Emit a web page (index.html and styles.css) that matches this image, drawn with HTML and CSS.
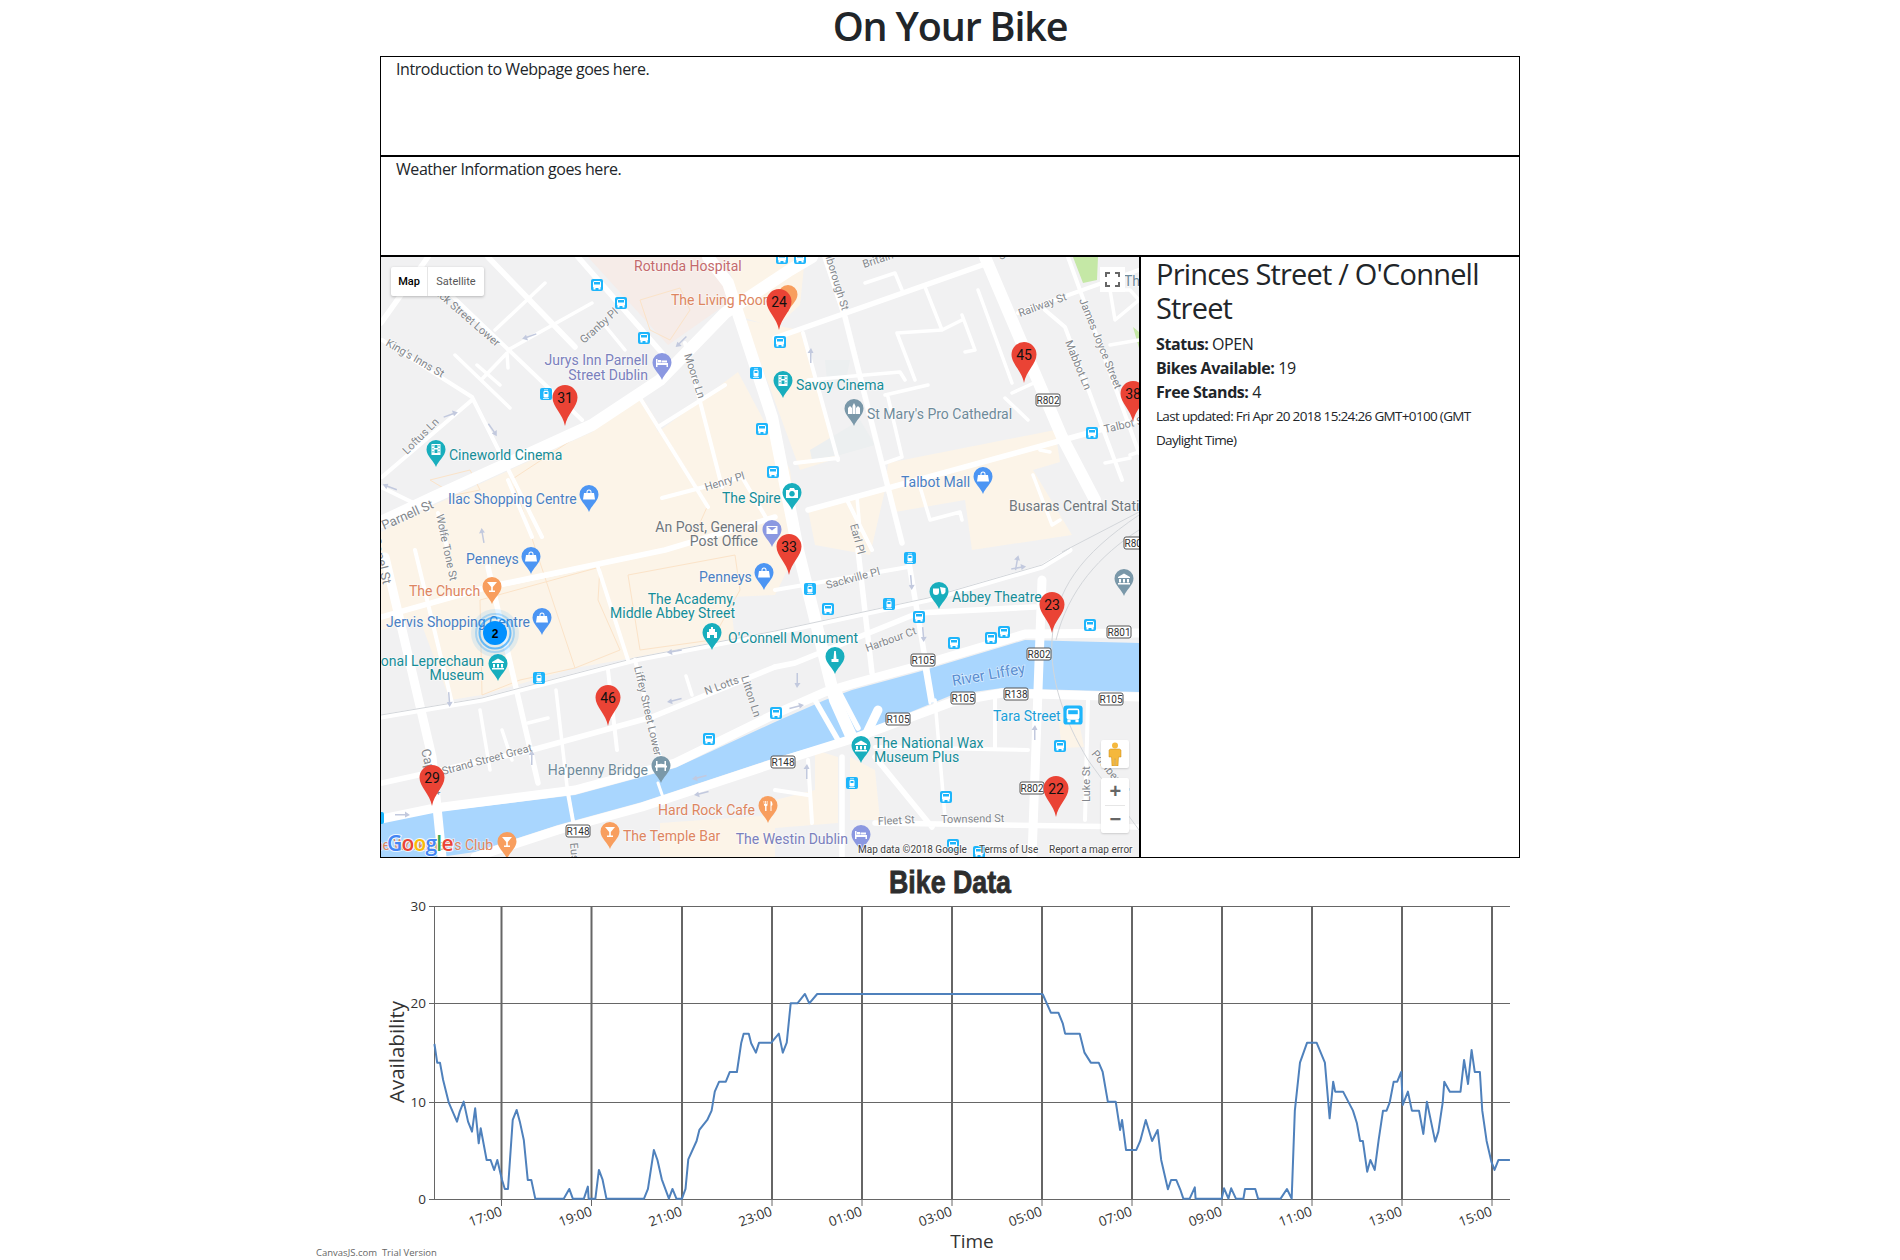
FILE: index.html
```html
<!DOCTYPE html>
<html lang="en">
<head>
    <meta charset="UTF-8">
    <title>On Your Bike</title>
    <link rel="stylesheet" href="styles.css">
</head>
<body>
    <h1 class="page-title">On Your Bike</h1>
    <div class="container">
        <div class="box">Introduction to Webpage goes here.</div>
        <div class="box">Weather Information goes here.</div>
        <div class="map-row">
            <div class="map-box">
                <svg class="map" viewBox="381 257 758 600" xmlns="http://www.w3.org/2000/svg">
                    <defs>
                        <path id="pin" d="M0 17C-2 11-9.5 6-9.5-.5a9.5 9.5 0 0 1 19 0C9.500 6 2 11 0 17z"/>
                        <path id="marker" d="M0 41C-2 29-12.500 22-12.500 12.500a12.500 12.500 0 0 1 25 0C12.500 22 2 29 0 41z"/>
                        <path id="arrow" d="M-7 0H3v-2.500L8 1 3 3.500V1.500H-7z"/>
                        <g id="bus">
                            <rect x="-6" y="-6" width="12" height="12" rx="2" fill="#1db5fb"/>
                            <rect x="-4" y="-4" width="8" height="7" rx="1.500" fill="#fff"/>
                            <rect x="-3" y="-3" width="6" height="2.500" fill="#1db5fb"/>
                            <path d="M-3.500 3h2v1.500h-2zM1.500 3h2v1.500h-2z" fill="#fff"/>
                        </g>
                        <g id="tram">
                            <rect x="-6" y="-6" width="12" height="12" rx="2" fill="#1db5fb"/>
                            <rect x="-2.500" y="-3" width="5" height="6.500" rx="1" fill="#fff"/>
                            <rect x="-1.500" y="-2" width="3" height="2" fill="#1db5fb"/>
                            <path d="M-2-4.500h4v.8h-4zM-3 4h6v.8h-6z" fill="#fff"/>
                        </g>
                        <path id="bag" d="M-5-2h10l1 6.500h-12zM-2.500-2v-1a2.500 2.500 0 0 1 5 0v1h-1v-1a1.500 1.500 0 0 0-3 0v1z"/>
                        <path id="film" d="M-4.500-6h9v11h-9zM-3.500-5v1.500h1V-5zM2.500-5v1.500h1V-5zM-3.500-2v1.500h1V-2zM2.500-2v1.500h1V-2zM-3.500 1v1.500h1V1zM2.500 1v1.500h1V1zM-1.500-5v3h3v-3zM-1.500-.500v3.500h3V-.500z" fill-rule="evenodd"/>
                        <path id="bed" d="M-6-4h1.500v4H6v4H4.500V2h-9v2H-6zM-4-3h3v2.500h-3zM-.500-2.500H5V-.500H-.500z"/>
                        <path id="glass" d="M-5-5H5L.800 0v3.500H3V5h-6V3.500H-.800V0z"/>
                        <path id="fork" d="M-4.500-5h.8v3h.8v-3h.8v3h.8v-3h.8v4.500l-1 .8V5h-1.400V.300l-1-.8zM2.500-5c1.500 0 2 2 2 4l-1 1v5H2.500z"/>
                        <path id="museum" d="M0-5.500L6-2v1H-6v-1zM-5 0h2v3.500h-2zM-1 0h2v3.500h-2zM3 0h2v3.500H3zM-6 4h12v1.500H-6z"/>
                        <path id="letter" d="M-5.500-4h11v8h-11zM-4.500-3L0 .500 4.500-3z" fill-rule="evenodd"/>
                        <path id="camera" d="M-6-3h3l1-2h4l1 2h3v8H-6zM0-2a2.800 2.800 0 1 0 .01 0z" fill-rule="evenodd"/>
                        <path id="church" d="M-6 5V-1l2-2 2 2v6zM-1.500 5V-3L0-6 1.500-3V5zM2 5V-1l2-2 2 2v6z"/>
                        <path id="masks" d="M-6-3.500h6v3.500a3 3 0 0 1-6 0zM1-5l5.500 1V0a3 3 0 0 1-4 2z"/>
                        <path id="castle" d="M-5 5V-1h2v-3h2v-2h2v2h2v3h2v6h-3V2h-4v3z"/>
                        <path id="obelisk" d="M-.800-6h1.600L1.500 2h2v3h-7V2h2z"/>
                        <path id="span" d="M-6 0c3-3 9-3 12 0v1.500H-6zM-5-5h1.500V5H-5zM3.500-5H5V5H3.500z"/>
                    </defs>

                    <rect class="m-ground" x="381" y="257" width="758" height="600"/>

                    <!-- shops and builtup blocks -->
                    <path class="m-shops" d="M381 532L432 506 592 432 640 395 658 432 738 372 790 470 800 545 775 595 730 597 735 640 575 668 482 695 450 700 420 620 381 630z"/>
                    <path class="m-shops" d="M745 320L800 330 838 458 800 470z"/>
                    <path class="m-shops" d="M725 257H805L800 305 775 328 745 318z"/>
                    <path class="m-shops" d="M888 463L1055 430 1060 462 1033 470 1072 535 972 550 965 500 895 512 885 490 808 510 815 545 870 555 885 490z"/>
                    <path class="m-shops" d="M775 800L815 790 815 750 838 757 838 823 775 828zM850 757L875 770 880 820 850 820zM660 823L775 815 775 857 660 857zM1058 717H1078L1084 747 1062 748z"/>
                    <path class="m-rotunda" d="M588 257H730L725 305 668 345z"/>
                    <path class="m-park" d="M1073 257H1098L1097 280 1083 283zM1133 327L1139 332V348z"/>
                    <path class="m-block" d="M825 360H850L845 385 828 390zM810 450L860 420 875 445 840 455 812 460z"/>

                    <!-- building outlines -->
                    <path class="m-outline" d="M511 480L640 395 708 505 690 545M512 478L575 668M640 300L680 288 690 310 670 340 650 330zM470 470L430 480 455 495 480 490z"/>
                    <path class="m-outline" d="M480 600L600 567 598 600 620 650 575 668 520 680 482 695zM628 575L735 555 740 590 712 640 640 650z"/>

                    <!-- river -->
                    <path class="m-river" d="M381 822L435 812 575 795 675 768 775 722 825 700 852 690 918 672 1025 640 1139 643V692L1002 688 952 695 855 735 775 758 642 802 558 825 475 852 440 857H381z"/>

                    <!-- roads -->
                    <path class="r-xl" d="M381 522L432 498 592 425 660 380 725 313 790 270 812 257"/>
                    <path class="r-xl" d="M708 257L728 283 772 417 798 550 835 700 852 738"/>
                    <path class="r-xl" d="M985 257L1062 437 1095 500"/>
                    <path class="r-lg" d="M381 819L435 808 575 790 675 763 775 714 825 692 852 684 918 666 1025 634 1139 633"/>
                    <path class="r-lg" d="M475 857L558 830 642 807 775 763 855 738 952 702 1002 693 1139 697"/>
                    <path class="r-lg" d="M1042 580L1038 690 1032 857"/>
                    <path class="r-lg" d="M385 557L432 757 442 857"/>
                    <path class="r-lg" d="M878 710L866 735"/>
                    <path class="r-md" d="M381 323L428 257M775 338L988 263M808 510L1092 432 1139 420M775 667L795 663 918 613 1035 607M775 517L665 550 488 587 381 617"/>
                    <path class="r-md" d="M488 567L538 783M382 783L532 750 652 717 775 667M488 257L575 347M578 257L662 353M842 757V857M875 757L932 827M875 823L1139 827"/>
                    <path class="r-md" d="M825 257L845 317 902 543M908 557L932 700M858 550L872 673"/>
                    <path class="r-abbey" d="M381 717L482 700 635 660 775 633 928 600 1042 567 1070 550"/>
                    <path class="r-rail" d="M381 715L482 698 635 658 775 631 928 598 1042 565 1070 548"/>
                    <path class="r-sm" d="M425 270L582 420M382 340L472 397 542 537M382 477L472 400M381 487L428 510M685 343L722 487M658 427L725 385M637 393L708 507M662 498L742 477 775 533"/>
                    <path class="r-sm" d="M1018 313L1139 270M1045 310L1065 327 1122 480M1068 257L1139 453M847 500L872 550M803 333L838 460M795 463L838 458M415 550L452 703M438 513L447 547M508 480L532 537M598 567L628 660M635 660L660 757"/>
                    <path class="r-sm" d="M608 670L617 750M775 590L908 567M995 697V747M875 747L1028 750M1088 700L1085 820M808 760L812 823M775 790L808 795"/>
                    <path class="r-xs" d="M495 330L545 283M508 350L592 303M602 322L625 350M455 355L510 408M483 378L507 353 508 368M477 365L500 385M480 590L575 570M556 690L568 795 575 833M480 710L490 770M502 730L512 760M528 723L548 718M686 676L692 695M935 700L945 817"/>
                    <path class="r-xs" d="M865 283L895 273 902 290M897 333L942 330 962 320M897 333L915 380M925 287L942 330M962 315L975 350 965 352M978 290L1012 383M1012 393L1036 382M1005 398L1028 420M808 380L900 372 905 380M885 395L928 385M888 397L902 457 885 463"/>
                    <path class="r-xs" d="M918 480L930 520 960 512 962 520M1033 475L1052 525 1060 520M1040 450L1050 452M1130 455L1139 452M1105 463L1130 458M857 497L860 530"/>
                    <path class="r-xs" d="M1110 290H1130L1139 300 1115 320zM1110 345L1139 340"/>
                    <path class="r-rail" d="M1139 515C1080 555 1055 590 1052 640 1050 680 1064 720 1088 760L1139 830"/>
                    <path class="r-rail" d="M1139 530C1100 555 1068 590 1056 640M1139 512L1062 552"/>
                    <path class="r-thin" d="M658 783L665 803M568 790L575 830M924 668L930 703"/>
                    <path class="r-md" d="M838 690L858 728M815 700L838 740"/>

                    <!-- one-way arrows -->
                    <g class="m-arrows">
                        <use href="#arrow" transform="translate(530 337) rotate(160)"/>
                        <use href="#arrow" transform="translate(682 342) rotate(135)"/>
                        <use href="#arrow" transform="translate(450 414) rotate(-20)"/>
                        <use href="#arrow" transform="translate(493 429) rotate(55)"/>
                        <use href="#arrow" transform="translate(390 488) rotate(200)"/>
                        <use href="#arrow" transform="translate(443 534) rotate(-100)"/>
                        <use href="#arrow" transform="translate(482 536) rotate(-100)"/>
                        <use href="#arrow" transform="translate(810 356) rotate(-90)"/>
                        <use href="#arrow" transform="translate(450 699) rotate(85)"/>
                        <use href="#arrow" transform="translate(675 652) rotate(170)"/>
                        <use href="#arrow" transform="translate(675 701) rotate(165)"/>
                        <use href="#arrow" transform="translate(531 758) rotate(-90)"/>
                        <use href="#arrow" transform="translate(402 814) rotate(0)"/>
                        <use href="#arrow" transform="translate(700 778) rotate(165)"/>
                        <use href="#arrow" transform="translate(702 794) rotate(165)"/>
                        <use href="#arrow" transform="translate(912 582) rotate(85)"/>
                        <use href="#arrow" transform="translate(1016 563) rotate(-80)"/>
                        <use href="#arrow" transform="translate(1018 567) rotate(-10)"/>
                        <use href="#arrow" transform="translate(924 634) rotate(85)"/>
                        <use href="#arrow" transform="translate(798 680) rotate(90)"/>
                        <use href="#arrow" transform="translate(796 706) rotate(-15)"/>
                        <use href="#arrow" transform="translate(1034 733) rotate(-90)"/>
                        <use href="#arrow" transform="translate(806 772) rotate(-90)"/>
                    </g>

                    <!-- street names -->
                    <g class="m-street">
                        <text transform="translate(864 268) rotate(-18)">Britain</text>
                        <text transform="translate(1000 260) rotate(-20)">Sea</text>
                        <text class="t-end" transform="translate(842 311) rotate(73)">Marlborough St</text>
                        <text transform="translate(1020 317) rotate(-20)">Railway St</text>
                        <text transform="translate(1079 300) rotate(68)">James Joyce Street</text>
                        <text transform="translate(1065 342) rotate(68)">Mabbot Ln</text>
                        <text transform="translate(1105 433) rotate(-13)">Talbot St</text>
                        <text transform="translate(684 355) rotate(72)">Moore Ln</text>
                        <text transform="translate(584 344) rotate(-42)">Granby Pl</text>
                        <text class="t-end" transform="translate(496 347) rotate(41)">Dominick Street Lower</text>
                        <text transform="translate(385 345) rotate(30)">King's Inns St</text>
                        <text transform="translate(407 455) rotate(-45)">Loftus Ln</text>
                        <text class="t-big" transform="translate(384 530) rotate(-24)">Parnell St</text>
                        <text transform="translate(436 515) rotate(78)">Wolfe Tone St</text>
                        <text transform="translate(706 491) rotate(-17)">Henry Pl</text>
                        <text transform="translate(850 525) rotate(75)">Earl Pl</text>
                        <text transform="translate(827 589) rotate(-15)">Sackville Pl</text>
                        <text transform="translate(867 652) rotate(-20)">Harbour Ct</text>
                        <text transform="translate(634 667) rotate(77)">Liffey Street Lower</text>
                        <text transform="translate(741 677) rotate(72)">Litton Ln</text>
                        <text transform="translate(706 695) rotate(-20)">N Lotts</text>
                        <text transform="translate(443 775) rotate(-15)">Strand Street Great</text>
                        <text class="t-big" transform="translate(421 750) rotate(76)">Capel St</text>
                        <text class="t-end t-big" transform="translate(383 585) rotate(76)">Capel St</text>
                        <text transform="translate(570 843) rotate(85)">Eustace St</text>
                        <text transform="translate(878 825) rotate(-3)">Fleet St</text>
                        <text transform="translate(941 823) rotate(-1)">Townsend St</text>
                        <text transform="translate(1090 802) rotate(-90)">Luke St</text>
                        <text transform="translate(1091 754) rotate(50)">Poolbeg St</text>
                    </g>

                    <!-- bus and tram stops -->
                    <use href="#bus" x="597" y="285"/>
                    <use href="#bus" x="621" y="303"/>
                    <use href="#bus" x="644" y="338"/>
                    <use href="#tram" x="756" y="373"/>
                    <use href="#tram" x="546" y="394"/>
                    <use href="#bus" x="762" y="429"/>
                    <use href="#bus" x="773" y="472"/>
                    <use href="#bus" x="782" y="258"/>
                    <use href="#bus" x="800" y="258"/>
                    <use href="#bus" x="780" y="342"/>
                    <use href="#bus" x="1092" y="433"/>
                    <use href="#tram" x="539" y="678"/>
                    <use href="#bus" x="709" y="739"/>
                    <use href="#bus" x="776" y="713"/>
                    <use href="#tram" x="378" y="818"/>
                    <use href="#tram" x="910" y="558"/>
                    <use href="#tram" x="810" y="589"/>
                    <use href="#bus" x="828" y="609"/>
                    <use href="#tram" x="889" y="604"/>
                    <use href="#bus" x="919" y="617"/>
                    <use href="#bus" x="954" y="643"/>
                    <use href="#bus" x="991" y="638"/>
                    <use href="#bus" x="1004" y="632"/>
                    <use href="#bus" x="1090" y="625"/>
                    <use href="#bus" x="1060" y="746"/>
                    <use href="#tram" x="852" y="783"/>
                    <use href="#bus" x="946" y="797"/>
                    <use href="#bus" x="953" y="845"/>
                    <use href="#bus" x="979" y="852"/>
                    <g transform="translate(1073 715) scale(1.600)"><use href="#bus"/></g>

                    <!-- road shields -->
                    <g class="m-shield" transform="translate(1048 400)"><rect x="-12" y="-6" width="24" height="12" rx="2"/><text y="3.500">R802</text></g>
                    <g class="m-shield" transform="translate(1136 543)"><rect x="-12" y="-6" width="24" height="12" rx="2"/><text y="3.500">R802</text></g>
                    <g class="m-shield" transform="translate(1119 632)"><rect x="-12" y="-6" width="24" height="12" rx="2"/><text y="3.500">R801</text></g>
                    <g class="m-shield" transform="translate(1039 654)"><rect x="-12" y="-6" width="24" height="12" rx="2"/><text y="3.500">R802</text></g>
                    <g class="m-shield" transform="translate(923 660)"><rect x="-12" y="-6" width="24" height="12" rx="2"/><text y="3.500">R105</text></g>
                    <g class="m-shield" transform="translate(963 698)"><rect x="-12" y="-6" width="24" height="12" rx="2"/><text y="3.500">R105</text></g>
                    <g class="m-shield" transform="translate(1016 694)"><rect x="-12" y="-6" width="24" height="12" rx="2"/><text y="3.500">R138</text></g>
                    <g class="m-shield" transform="translate(1111 699)"><rect x="-12" y="-6" width="24" height="12" rx="2"/><text y="3.500">R105</text></g>
                    <g class="m-shield" transform="translate(898 719)"><rect x="-12" y="-6" width="24" height="12" rx="2"/><text y="3.500">R105</text></g>
                    <g class="m-shield" transform="translate(783 762)"><rect x="-12" y="-6" width="24" height="12" rx="2"/><text y="3.500">R148</text></g>
                    <g class="m-shield" transform="translate(1032 788)"><rect x="-12" y="-6" width="24" height="12" rx="2"/><text y="3.500">R802</text></g>
                    <g class="m-shield" transform="translate(578 831)"><rect x="-12" y="-6" width="24" height="12" rx="2"/><text y="3.500">R148</text></g>

                    <!-- place names -->
                    <g class="m-place">
                        <text class="c-red" x="634" y="271">Rotunda Hospital</text>
                        <text class="c-orange" x="671" y="305">The Living Room</text>
                        <text class="c-indigo t-end" x="648" y="365">Jurys Inn Parnell</text>
                        <text class="c-indigo t-end" x="648" y="380">Street Dublin</text>
                        <text class="c-teal" x="449" y="460">Cineworld Cinema</text>
                        <text class="c-blue" x="448" y="504">Ilac Shopping Centre</text>
                        <text class="c-gray t-end" x="758" y="532">An Post, General</text>
                        <text class="c-gray t-end" x="758" y="546">Post Office</text>
                        <text class="c-teal" x="722" y="503">The Spire</text>
                        <text class="c-teal" x="796" y="390">Savoy Cinema</text>
                        <text class="c-slate" x="867" y="419">St Mary's Pro Cathedral</text>
                        <text class="c-blue" x="901" y="487">Talbot Mall</text>
                        <text class="c-gray" x="1009" y="511">Busaras Central Station</text>
                        <text class="c-slate" x="1124" y="286">The</text>
                        <text class="c-blue" x="466" y="564">Penneys</text>
                        <text class="c-blue" x="699" y="582">Penneys</text>
                        <text class="c-orange" x="409" y="596">The Church</text>
                        <text class="c-blue" x="386" y="627">Jervis Shopping Centre</text>
                        <text class="c-teal t-end" x="484" y="666">National Leprechaun</text>
                        <text class="c-teal t-end" x="484" y="680">Museum</text>
                        <text class="c-teal t-end" x="735" y="604">The Academy,</text>
                        <text class="c-teal t-end" x="735" y="618">Middle Abbey Street</text>
                        <text class="c-teal" x="728" y="643">O'Connell Monument</text>
                        <text class="c-teal" x="952" y="602">Abbey Theatre</text>
                        <text class="c-water" transform="translate(953 686) rotate(-10)">River Liffey</text>
                        <text class="c-sky" x="993" y="721">Tara Street</text>
                        <text class="c-teal" x="874" y="748">The National Wax</text>
                        <text class="c-teal" x="874" y="762">Museum Plus</text>
                        <text class="c-slate t-end" x="648" y="775">Ha'penny Bridge</text>
                        <text class="c-orange t-end" x="755" y="815">Hard Rock Cafe</text>
                        <text class="c-orange" x="623" y="841">The Temple Bar</text>
                        <text class="c-indigo t-end" x="848" y="844">The Westin Dublin</text>
                        <text class="c-orange t-end" x="493" y="850">The Workman's Club</text>
                    </g>

                    <!-- point of interest pins -->
                    <g class="m-poi">
                        <g class="p-teal" transform="translate(436 450)"><use href="#pin"/><use href="#film" class="glyph"/></g>
                        <g class="p-indigo" transform="translate(662 363)"><use href="#pin"/><use href="#bed" class="glyph"/></g>
                        <g class="p-blue" transform="translate(589 495)"><use href="#pin"/><use href="#bag" class="glyph"/></g>
                        <g class="p-indigo" transform="translate(772 530)"><use href="#pin"/><use href="#letter" class="glyph"/></g>
                        <g class="p-teal" transform="translate(792 493)"><use href="#pin"/><use href="#camera" class="glyph"/></g>
                        <g class="p-teal" transform="translate(783 381)"><use href="#pin"/><use href="#film" class="glyph"/></g>
                        <g class="p-slate" transform="translate(854 409)"><use href="#pin"/><use href="#church" class="glyph"/></g>
                        <g class="p-blue" transform="translate(983 477)"><use href="#pin"/><use href="#bag" class="glyph"/></g>
                        <g class="p-slate" transform="translate(1124 579)"><use href="#pin"/><use href="#museum" class="glyph"/></g>
                        <g class="p-teal" transform="translate(939 592)"><use href="#pin"/><use href="#masks" class="glyph"/></g>
                        <g class="p-teal" transform="translate(835 657)"><use href="#pin"/><use href="#obelisk" class="glyph"/></g>
                        <g class="p-teal" transform="translate(861 746)"><use href="#pin"/><use href="#museum" class="glyph"/></g>
                        <g class="p-blue" transform="translate(531 557)"><use href="#pin"/><use href="#bag" class="glyph"/></g>
                        <g class="p-blue" transform="translate(764 573)"><use href="#pin"/><use href="#bag" class="glyph"/></g>
                        <g class="p-orange" transform="translate(492 587)"><use href="#pin"/><use href="#glass" class="glyph"/></g>
                        <g class="p-blue" transform="translate(542 618)"><use href="#pin"/><use href="#bag" class="glyph"/></g>
                        <g class="p-teal" transform="translate(498 664)"><use href="#pin"/><use href="#museum" class="glyph"/></g>
                        <g class="p-teal" transform="translate(712 633)"><use href="#pin"/><use href="#castle" class="glyph"/></g>
                        <g class="p-slate" transform="translate(661 766)"><use href="#pin"/><use href="#span" class="glyph"/></g>
                        <g class="p-orange" transform="translate(768 806)"><use href="#pin"/><use href="#fork" class="glyph"/></g>
                        <g class="p-orange" transform="translate(610 832)"><use href="#pin"/><use href="#glass" class="glyph"/></g>
                        <g class="p-orange" transform="translate(507 842)"><use href="#pin"/><use href="#glass" class="glyph"/></g>
                        <g class="p-indigo" transform="translate(861 835)"><use href="#pin"/><use href="#bed" class="glyph"/></g>
                        <g class="p-orange" transform="translate(788 295)"><use href="#pin"/></g>
                    </g>

                    <!-- station markers -->
                    <g class="m-marker">
                        <g transform="translate(565 385)"><use href="#marker"/><text y="18">31</text></g>
                        <g transform="translate(779 289)"><use href="#marker"/><text y="18">24</text></g>
                        <g transform="translate(1024 342)"><use href="#marker"/><text y="18">45</text></g>
                        <g transform="translate(1133 381)"><use href="#marker"/><text y="18">38</text></g>
                        <g transform="translate(789 534)"><use href="#marker"/><text y="18">33</text></g>
                        <g transform="translate(1052 592)"><use href="#marker"/><text y="18">23</text></g>
                        <g transform="translate(608 685)"><use href="#marker"/><text y="18">46</text></g>
                        <g transform="translate(432 765)"><use href="#marker"/><text y="18">29</text></g>
                        <g transform="translate(1056 776)"><use href="#marker"/><text y="18">22</text></g>
                    </g>

                    <!-- cluster -->
                    <g class="m-cluster" transform="translate(495 633)">
                        <circle class="ring-a" r="24"/>
                        <circle class="ring-b" r="19"/>
                        <circle class="ring-c" r="15.500"/>
                        <circle class="dot" r="12"/>
                        <text y="4.500">2</text>
                    </g>

                    <!-- google logo and map footer -->
                    <text class="m-logo" x="387" y="851"><tspan fill="#4285f4">G</tspan><tspan fill="#ea4335">o</tspan><tspan fill="#fbbc05">o</tspan><tspan fill="#4285f4">g</tspan><tspan fill="#34a853">l</tspan><tspan fill="#ea4335">e</tspan></text>
                    <g class="m-foot">
                        <text x="858" y="853">Map data ©2018 Google</text>
                        <text x="979" y="853">Terms of Use</text>
                        <text x="1049" y="853">Report a map error</text>
                    </g>
                </svg>

                <div class="map-type">
                    <span class="map-type-on">Map</span>
                    <span class="map-type-off">Satellite</span>
                </div>
                <div class="map-btn map-full">
                    <svg width="15" height="15" viewBox="0 0 15 15"><path d="M1 5V1h4M10 1h4v4M14 10v4h-4M5 14H1v-4" fill="none" stroke="#666" stroke-width="2"/></svg>
                </div>
                <div class="map-btn map-peg">
                    <svg width="14" height="24" viewBox="0 0 14 24"><circle cx="7" cy="3.500" r="3" fill="#f5b83d"/><path d="M2.500 7h9l1.500 1v7h-2.500l-.5 9H7.500v-7h-1v7H4l-.5-9H1V8z" fill="#f5b83d" stroke="#c98a10" stroke-width=".5"/></svg>
                </div>
                <div class="map-btn map-zoom">
                    <span class="zoom-sign">+</span>
                    <span class="zoom-rule"></span>
                    <span class="zoom-sign">−</span>
                </div>
            </div>
            <div class="info-box">
                <h2 class="station-name">Princes Street / O'Connell Street</h2>
                <p><b>Status:</b> OPEN</p>
                <p><b>Bikes Available:</b> 19</p>
                <p><b>Free Stands:</b> 4</p>
                <p class="updated">Last updated: Fri Apr 20 2018 15:24:26 GMT+0100 (GMT Daylight Time)</p>
            </div>
        </div>
    </div>

    <svg class="chart" viewBox="0 858 1900 402" xmlns="http://www.w3.org/2000/svg">
        <text class="chart-title" x="950" y="893" textLength="122" lengthAdjust="spacingAndGlyphs">Bike Data</text>

        <g class="grid-h">
            <path d="M429 906.500H1510M429 1003.500H1510M429 1102.500H1510M429 1199.500H1510"/>
            <path d="M434.500 906V1200"/>
        </g>
        <g class="grid-v">
            <path d="M501.500 906V1200M591.500 906V1200M682 906V1200M772 906V1200M862 906V1200M952 906V1200M1042 906V1200M1132 906V1200M1222 906V1200M1312 906V1200M1402 906V1200M1492 906V1200"/>
        </g>
        <g class="grid-h">
            <path d="M501.500 1200V1206M591.500 1200V1206M682 1200V1206M772 1200V1206M862 1200V1206M952 1200V1206M1042 1200V1206M1132 1200V1206M1222 1200V1206M1312 1200V1206M1402 1200V1206M1492 1200V1206"/>
        </g>

        <g transform="translate(300 860) scale(.3954 .3333)">
            <polyline class="series" points="340,552 347,608 354,608 362,660 376,727 397,785 404,755 414,725 425,785 435,815 443,745 452,850 457,805 472,900 482,900 491,930 499,900 511,960 518,987 526,987 538,780 548,750 556,785 566,840 576,960 585,960 595,1016 667,1016 681,987 690,1016 718,1016 728,980 730,1016 747,1016 756,930 765,958 775,1016 870,1016 880,987 895,870 904,900 915,958 933,1016 942,987 952,1016 966,1016 975,987 982,898 1003,843 1010,810 1030,780 1041,752 1049,695 1060,665 1077,665 1087,636 1105,636 1116,548 1122,521 1135,521 1141,550 1153,578 1161,548 1192,548 1211,521 1221,578 1231,548 1241,430 1258,430 1277,402 1288,430 1308,402 1878,402"/>
        </g>
        <g transform="translate(920 860) scale(.3954 .3333)">
            <polyline class="series" points="310,402 331,458 350,458 361,490 367,521 404,521 416,578 432,608 452,608 462,636 475,725 495,725 506,810 511,780 521,870 547,870 557,843 571,780 587,843 601,810 610,900 627,988 635,960 648,960 658,988 666,1016 682,1016 695,982 697,1016 763,1016 769,985 780,1016 787,985 799,1016 818,1016 822,987 848,987 855,1016 912,1016 928,987 940,1016 948,752 961,608 979,548 1003,548 1024,608 1036,775 1045,665 1050,695 1070,695 1095,752 1105,790 1113,843 1120,843 1131,935 1139,900 1150,930 1160,840 1171,752 1180,752 1188,727 1198,665 1207,665 1217,636 1221,735 1234,695 1244,752 1262,752 1273,822 1282,725 1303,845 1311,815 1322,727 1326,665 1340,695 1367,695 1376,600 1386,672 1395,570 1403,636 1416,636 1422,752 1433,843 1445,905 1453,930 1463,900 1492,900"/>
        </g>

        <g class="axis-y">
            <text x="426" y="911">30</text>
            <text x="426" y="1008">20</text>
            <text x="426" y="1107">10</text>
            <text x="426" y="1204">0</text>
        </g>
        <g class="axis-x">
            <text transform="translate(503 1215) rotate(-20)">17:00</text>
            <text transform="translate(593 1215) rotate(-20)">19:00</text>
            <text transform="translate(683 1215) rotate(-20)">21:00</text>
            <text transform="translate(773 1215) rotate(-20)">23:00</text>
            <text transform="translate(863 1215) rotate(-20)">01:00</text>
            <text transform="translate(953 1215) rotate(-20)">03:00</text>
            <text transform="translate(1043 1215) rotate(-20)">05:00</text>
            <text transform="translate(1133 1215) rotate(-20)">07:00</text>
            <text transform="translate(1223 1215) rotate(-20)">09:00</text>
            <text transform="translate(1313 1215) rotate(-20)">11:00</text>
            <text transform="translate(1403 1215) rotate(-20)">13:00</text>
            <text transform="translate(1493 1215) rotate(-20)">15:00</text>
        </g>
        <text class="axis-name axis-long" transform="translate(404 1052) rotate(-90)">Availability</text>
        <text class="axis-name" x="972" y="1248">Time</text>
        <text class="credit" x="316" y="1256">CanvasJS.com  Trial Version</text>
    </svg>
</body>
</html>
```

FILE: styles.css
```css
* {
    margin: 0;
    padding: 0;
    box-sizing: border-box;
}

body {
    font-family: "Open Sans", "Noto Sans", sans-serif;
    font-size: 16px;
    line-height: 24px;
    letter-spacing: -0.027em;
    color: #212529;
    background: #fff;
}

.page-title {
    height: 56px;
    font-size: 39.5px;
    font-weight: 600;
    line-height: 52px;
    letter-spacing: -0.03em;
    text-align: center;
}

.container {
    width: 1140px;
    margin: 0 auto;
}

.box {
    height: 100px;
    padding: 0 15px;
    border: 1px solid #000;
}

.map-row {
    display: flex;
    height: 602px;
}

.map-box {
    position: relative;
    width: 760px;
    border: 1px solid #000;
    overflow: hidden;
}

.map {
    display: block;
    width: 758px;
    height: 600px;
    letter-spacing: 0;
}

.info-box {
    width: 380px;
    padding: 0 15px;
    border: 1px solid #000;
}

.station-name {
    margin-bottom: 8px;
    font-size: 29px;
    font-weight: 400;
    line-height: 33.5px;
    letter-spacing: -0.028em;
}

.info-box b {
    font-weight: 700;
}

.updated {
    font-size: 13.5px;
    letter-spacing: -0.05em;
}

/* map canvas */
.m-ground { fill: #f1f1f2; }
.m-shops { fill: #fcf4e8; }
.m-rotunda { fill: #f6ece8; }
.m-park { fill: #c5e8a6; }
.m-block { fill: #eceff0; }
.m-outline { fill: none; stroke: #fbe3c8; stroke-width: 1; }
.m-river { fill: #a9d6fe; }
.m-arrows { fill: #c2c9de; }

.r-xl, .r-lg, .r-md, .r-sm, .r-xs, .r-thin, .r-abbey {
    fill: none;
    stroke: #fff;
    stroke-linecap: round;
    stroke-linejoin: round;
}

.r-xl { stroke-width: 12; }
.r-lg { stroke-width: 9; }
.r-md { stroke-width: 5.5; }
.r-sm { stroke-width: 4; }
.r-xs { stroke-width: 3.5; }
.r-thin { stroke-width: 3; }
.r-abbey { stroke-width: 5; stroke: #fff; }
.r-rail { fill: none; stroke: #d3d6da; stroke-width: 1; }

.m-street text {
    font-family: Roboto, sans-serif;
    font-size: 11px;
    fill: #83878c;
    paint-order: stroke;
    stroke: #fff;
    stroke-width: 1.5;
    stroke-opacity: .6;
}

.m-street .t-big { font-size: 13px; }

.t-end { text-anchor: end; }

.m-shield rect { fill: #fff; stroke: #555; stroke-width: 1; }
.m-shield text {
    font-family: Roboto, sans-serif;
    font-size: 10px;
    fill: #333;
    text-anchor: middle;
}

.m-place text {
    font-family: Roboto, sans-serif;
    font-size: 14px;
    paint-order: stroke;
    stroke: #fff;
    stroke-width: 1.5;
    stroke-opacity: .55;
}

.c-red { fill: #c4696c; }
.c-orange { fill: #dd8560; }
.c-indigo { fill: #7a80bd; }
.c-teal { fill: #158d98; }
.c-blue { fill: #4a80c3; }
.c-gray { fill: #6f767c; }
.c-slate { fill: #6e8a9a; }
.c-water { fill: #5b8fd1; font-size: 15px !important; }
.c-sky { fill: #1a9fd8; }

.p-teal { fill: #18aebd; }
.p-blue { fill: #4c95f3; }
.p-indigo { fill: #8b98e1; }
.p-slate { fill: #7a98a9; }
.p-orange { fill: #f89e5e; }
.glyph { fill: #fff; }

.m-marker use { fill: #ea4335; }
.m-marker text {
    font-family: Roboto, sans-serif;
    font-size: 14px;
    fill: #111;
    text-anchor: middle;
}

.m-cluster .ring-a { fill: #0090ff; fill-opacity: .1; }
.m-cluster .ring-b { fill: none; stroke: #0090ff; stroke-opacity: .25; stroke-width: 2; }
.m-cluster .ring-c { fill: none; stroke: #0090ff; stroke-opacity: .55; stroke-width: 2; }
.m-cluster .dot { fill: #0090ff; }
.m-cluster text {
    font-family: "Liberation Sans", sans-serif;
    font-size: 12px;
    font-weight: 700;
    fill: #000;
    text-anchor: middle;
}

.m-logo {
    font-family: "Open Sans", sans-serif;
    font-size: 21px;
    font-weight: 600;
    letter-spacing: -0.8px;
    paint-order: stroke;
    stroke: #fff;
    stroke-width: 2;
    stroke-opacity: .8;
}

.m-foot text {
    font-family: Roboto, sans-serif;
    font-size: 10px;
    fill: #444;
    paint-order: stroke;
    stroke: #fff;
    stroke-width: 2;
    stroke-opacity: .7;
}

/* map controls */
.map-type {
    position: absolute;
    left: 10px;
    top: 10px;
    display: flex;
    height: 29px;
    background: #fff;
    border-radius: 2px;
    box-shadow: 0 1px 3px rgba(0,0,0,0.25);
    font-family: Roboto, sans-serif;
    font-size: 11px;
    line-height: 30px;
    letter-spacing: 0;
}

.map-type-on {
    width: 37px;
    text-align: center;
    font-weight: 500;
    color: #000;
    border-right: 1px solid #e6e6e6;
}

.map-type-off {
    width: 56px;
    text-align: center;
    color: #565656;
}

.map-btn {
    position: absolute;
    left: 720px;
    display: flex;
    align-items: center;
    justify-content: center;
    width: 28px;
    background: #fff;
    border-radius: 2px;
    box-shadow: 0 1px 2px rgba(0,0,0,0.15);
}

.map-full {
    left: 719px;
    top: 10px;
    width: 25px;
    height: 25px;
    border-radius: 0;
    box-shadow: none;
}

.map-peg {
    top: 483px;
    height: 28px;
}

.map-zoom {
    top: 521px;
    height: 55px;
    flex-direction: column;
}

.zoom-sign {
    height: 27px;
    font-family: "Liberation Sans", sans-serif;
    font-size: 20px;
    font-weight: 700;
    line-height: 26px;
    color: #666;
}

.zoom-rule {
    width: 20px;
    height: 1px;
    background: #e6e6e6;
}

/* chart */
.chart {
    display: block;
    width: 1900px;
    height: 402px;
    letter-spacing: 0;
}

.chart-title {
    font-family: "Liberation Sans", sans-serif;
    font-size: 31px;
    font-weight: 700;
    fill: #2e2e2e;
    stroke: #2e2e2e;
    stroke-width: .8;
    text-anchor: middle;
}

.grid-h path { fill: none; stroke: #666; stroke-width: 1; }
.grid-v path { fill: none; stroke: #666; stroke-width: 2; }

.series {
    fill: none;
    stroke: #4f81bc;
    stroke-width: 2;
    stroke-linejoin: round;
    vector-effect: non-scaling-stroke;
}

.axis-y text, .axis-x text {
    font-family: "Open Sans", sans-serif;
    font-size: 13.5px;
    fill: #333;
    text-anchor: end;
}

.axis-name {
    font-family: "Open Sans", sans-serif;
    font-size: 19px;
    fill: #333;
    text-anchor: middle;
}

.axis-long {
    font-size: 20.5px;
}

.credit {
    font-family: "Open Sans", sans-serif;
    font-size: 9.5px;
    fill: #666;
    white-space: pre;
}
```
